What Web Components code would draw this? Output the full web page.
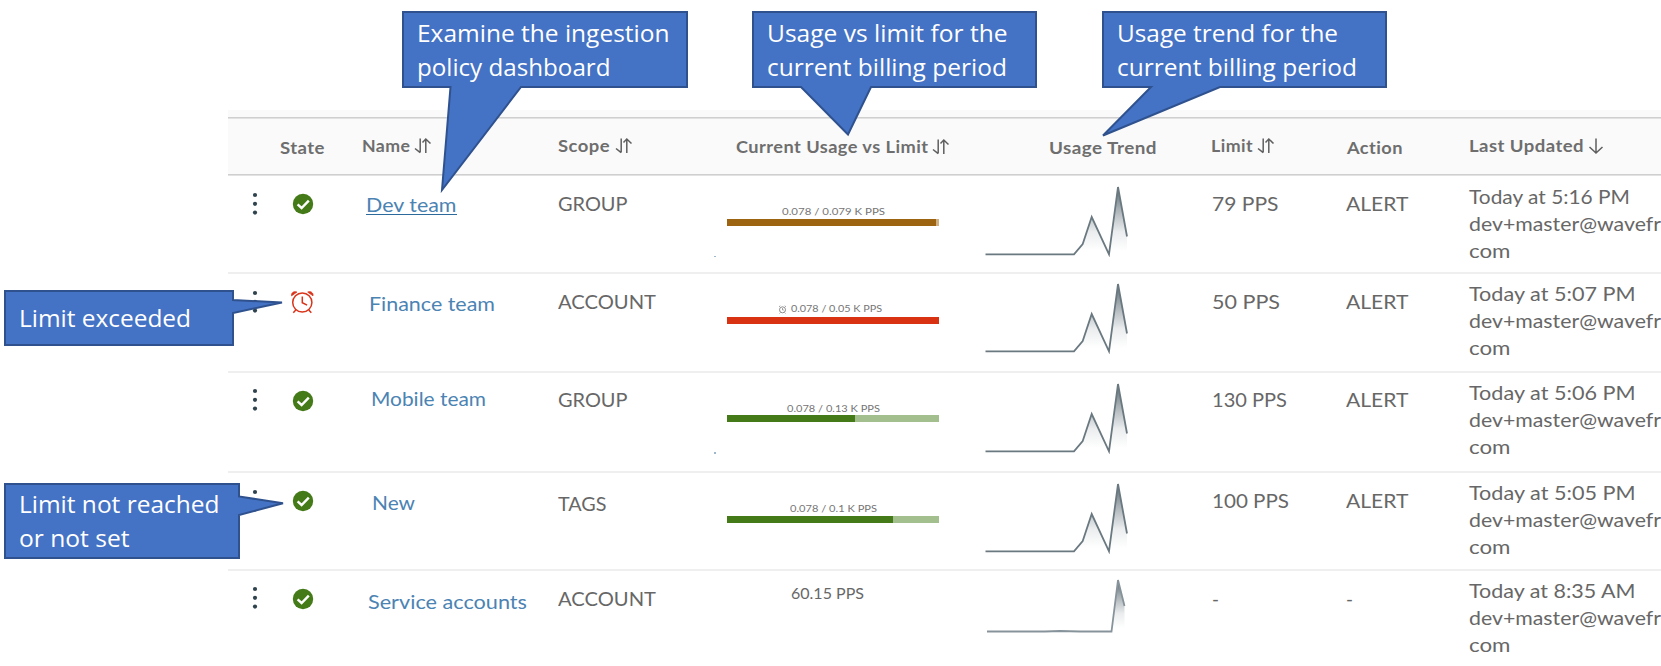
<!DOCTYPE html>
<html lang="en">
<head>
<meta charset="utf-8">
<title>Ingestion policies</title>
<style>
html,body{margin:0;height:666px;overflow:hidden;background:#fff}
body{font-family:Lato,"Open Sans",sans-serif;position:relative}
</style>
</head>
<body>
<policy-page></policy-page>
<script>
const mount = (el, html) => { const r = el.attachShadow({mode:'open'}); const t = document.createElement('template'); t.innerHTML = html; r.append(t.content.cloneNode(true)); return r; };

/* A single line of text stretched to a given width. */
customElements.define('fit-text', class extends HTMLElement {
  connectedCallback() {
    if (this.shadowRoot) return;
    const r = mount(this, `<style>:host{display:block;white-space:nowrap;line-height:20px}
      span{display:inline-block;transform-origin:0 50%}</style><span><slot></slot></span>`);
    const s = r.querySelector('span'), w = +this.getAttribute('w');
    if (w) { const k = w / s.getBoundingClientRect().width; s.style.transform = `scaleX(${k})`; this.style.width = w + 'px'; }
  }
});

customElements.define('sort-arrows', class extends HTMLElement {
  connectedCallback() {
    const single = this.hasAttribute('single');
    mount(this, `<style>:host{display:block;line-height:0}svg{fill:none;stroke:#5f5f5f;stroke-width:1.5}</style>` + (single
      ? `<svg width="16" height="18"><path d="M8 1.5V16M1.5 10L8 16L14.500 10"/></svg>`
      : `<svg width="18" height="18"><path d="M6.200 1.500V15.500M1 11.500L6.200 15.700M11.800 16V2M8.500 5.500L11.800 2L16.500 6.500"/></svg>`));
  }
});

customElements.define('state-icon', class extends HTMLElement {
  connectedCallback() {
    mount(this, `<style>:host{display:block;line-height:0}</style>` + (this.getAttribute('kind') === 'alarm'
      ? `<svg width="24" height="24" viewBox="0 0 24 24" fill="none" stroke="#d9331a" stroke-width="1.500"><circle cx="11.300" cy="12.500" r="9.600"/><path d="M11.300 6.500V12.700L16.100 15.200M4.800 20L2.300 22.800M17.800 20L20.300 22.800"/><path d="M.6 5.800C0 3 2.800.7 5.900 2.100zM22 5.800C22.600 3 19.800.7 16.700 2.100z" fill="#d9331a" stroke-width=".8"/></svg>`
      : `<svg width="24" height="24" viewBox="0 0 24 24"><circle cx="12" cy="12" r="10.200" fill="#447a17"/><path d="M6.600 12.300L10.600 16L17.800 8.600" fill="none" stroke="#fff" stroke-width="2.400"/></svg>`));
  }
});

customElements.define('row-menu', class extends HTMLElement {
  connectedCallback() {
    mount(this, `<style>:host{display:block;line-height:0}</style><svg width="8" height="24" fill="#2f434e"><circle cx="4" cy="3" r="2.100"/><circle cx="4" cy="11.800" r="2.100"/><circle cx="4" cy="20.600" r="2.100"/></svg>`);
  }
});

customElements.define('usage-bar', class extends HTMLElement {
  connectedCallback() {
    mount(this, `<style>:host{display:block;width:211.500px;height:6.700px;background:var(--rest)}i{display:block;height:100%;background:var(--fill);width:${this.getAttribute('value')}%}</style><i></i>`);
  }
});

customElements.define('trend-line', class extends HTMLElement {
  connectedCallback() {
    const last = this.hasAttribute('flat');
    const line = last ? 'M2 53.500L60 53.500L75 53L95 53.500H126.500L133 2L139.500 28' : 'M.5 69.300H89L97.700 59L106.700 32L124 69.300L133 2L142 51.500';
    const area = last ? 'M126.500 53.500L133 2L139.500 28V53.500z' : 'M89 69.300L97.700 59L106.700 32L124 69.300L133 2L142 51.500V69.300z';
    mount(this, `<style>:host{display:block;line-height:0}</style><svg width="146" height="72"><defs><linearGradient id="g" gradientUnits="userSpaceOnUse" x1="0" y1="2" x2="0" y2="${last?50:66}"><stop offset="0" stop-color="#56666f"/><stop offset=".35" stop-color="#56666f" stop-opacity=".5"/><stop offset=".7" stop-color="#56666f" stop-opacity=".12"/><stop offset="1" stop-color="#56666f" stop-opacity="0"/></linearGradient></defs><path d="${area}" fill="url(#g)"/><path d="${line}" fill="none" stroke="${last?'#87939a':'#6a7880'}" stroke-width="1.800"/></svg>`);
  }
});

const GRID = 'display:grid;grid-template-columns:54px 80px 196px 169px 258px 226px 135px 123px 192px;box-sizing:border-box;';
const cell = (top, left, body) => `<div style="padding:${top}px 0 0 ${left}px">${body}</div>`;

customElements.define('policy-head', class extends HTMLElement {
  connectedCallback() {
    const h = (top, left, w, label, sort='', gap=3) => cell(top, left, `<div class="h"><fit-text w="${w}">${label}</fit-text>${sort ? `<sort-arrows ${sort==='one'?'single':''} style="margin-left:${gap}px"></sort-arrows>`:''}</div>`);
    mount(this, `<style>:host{${GRID}height:66px;padding-top:7px;background:linear-gradient(#fafafa 0 7px,#cfcfcf 7px 8px,#e2e2e2 8px 9px,#fafafa 9px 64px,#cfcfcf 64px 65px,#e2e2e2 65px)}
      .h{display:flex;align-items:center;font-size:16.300px;font-weight:700;color:#6e6e6e;letter-spacing:.4px}</style>
      <div></div>${h(21,-2,45,'State').replace('padding:21px 0 0 -2px','margin:20.500px 0 0 -2.500px')}${h(19,0,48.5,'Name','two')}${h(19,0,52,'Scope','two',5)}${h(19.5,8.7,192.5,'Current Usage vs Limit','two',4)}${h(20.5,64,108,'Usage Trend')}${h(19,0,42,'Limit','two',4)}${h(20.5,0.500,56,'Action')}${h(19,0,115,'Last Updated','one',4)}`);
  }
});

/* y values are measured from the top edge of the row. */
customElements.define('policy-row', class extends HTMLElement {
  connectedCallback() {
    const d = this.data, y = c => c - d.top - 10;
    const usage = d.bar ? `<div class="u" style="padding:${d.usage[3]-d.top-10.500}px 0 0 ${d.usage[1]-727}px">${d.alarm?'<svg width="9" height="9" viewBox="0 0 9 9"><circle cx="4.500" cy="4.800" r="3" fill="none" stroke="#8a8a8a"/><path d="M1 1.800L2.300.8M8 1.800L6.700.8M4.500 3v2h1.300M2.500 7.500l-1 1M6.500 7.500l1 1" fill="none" stroke="#8a8a8a" stroke-width=".8"/></svg>':''}<fit-text w="${d.usage[2]}">${d.usage[0]}</fit-text></div><usage-bar value="${d.bar[1]}" style="margin:${d.bar[0]-d.usage[3]-9.500}px 0 0 .3px;--fill:${d.bar[2]};--rest:${d.bar[3]}"></usage-bar>${d.dot?'<b></b>':''}`
      : cell(y(d.usage[3]), d.usage[1]-727, `<fit-text style="font-size:15px" w="${d.usage[2]}">${d.usage[0]}</fit-text>`);
    mount(this, `<style>:host{${GRID}height:${d.h}px;border-bottom:${d.last?0:2}px solid #efefef;color:#676767;font-size:18.600px;overflow:hidden}
      .u{display:flex;align-items:center;font-size:${d.alarm?9.5:10.3}px;color:#757575}.u svg{margin-right:4px}
      a{color:#4b83b3;text-decoration:none}a.on{display:block;width:90.500px;height:18.500px;border-bottom:1.500px solid #2c6a9b}
      .t{display:grid;gap:7px}b{display:block;width:1.500px;height:1.500px;background:#9db8cc;margin:30px 0 0 -13px}</style>
      ${cell(d.icon-d.top-12.600,23,'<row-menu></row-menu>')}
      ${cell(d.icon-d.top-12,9,`<state-icon kind="${d.alarm?'alarm':'ok'}"></state-icon>`)}
      ${cell(y(d.name[3]),d.name[1]-362,`<a class="${d.on?'on':''}"><fit-text w="${d.name[2]}">${d.name[0]}</fit-text></a>`)}
      ${cell(y(d.scope[2]),0,`<fit-text w="${d.scope[1]}">${d.scope[0]}</fit-text>`)}
      <div>${usage}</div>
      ${cell(d.peak-d.top-2,0,`<trend-line ${d.last?'flat':''}></trend-line>`)}
      ${cell(y(d.limit[2]),0.5,`<fit-text w="${d.limit[1]}">${d.limit[0]}</fit-text>`)}
      ${cell(y(d.limit[2]),0,d.last?'<fit-text w="7">-</fit-text>':'<fit-text w="62.500">ALERT</fit-text>')}
      ${cell(y(d.when[2]),0,`<div class="t"><fit-text w="${d.when[1]}">${d.when[0]}</fit-text><fit-text w="192">dev+master@wavefr</fit-text><fit-text w="41.500">com</fit-text></div>`)}`);
  }
});

/* Speech-bubble annotation; its box and tail are one outline. */
customElements.define('call-out', class extends HTMLElement {
  connectedCallback() {
    const [x,y,w,h] = this.getAttribute('box').split(' ').map(Number);
    mount(this, `<style>:host{position:absolute;left:${x}px;top:${y}px;width:${w}px;height:${h}px;display:flex;flex-direction:column;justify-content:center;gap:14px;padding-left:15px;box-sizing:border-box;color:#fff}
      svg{position:absolute;left:0;top:0;overflow:visible}::slotted(*){position:relative}</style>
      <svg width="${w}" height="${h}"><path d="${this.getAttribute('shape')}" fill="#4472c4" stroke="#2f528f" stroke-width="2" stroke-miterlimit="4"/></svg><slot></slot>`);
  }
});

const G = '#447a17', GL = '#a3bf8d';
const rows = [
 {top:176,h:98,icon:204.300,on:1,name:['Dev team',366,90.500,205],scope:['GROUP',69.500,203.500],usage:['0.078 / 0.079 K PPS',782,103,211],bar:[219,98.800,'#9c6410','#d0b183'],peak:187,limit:['79 PPS',66.500,203.500],when:['Today at 5:16 PM',161,196.500],dot:1},
 {top:274,h:99,icon:302.300,alarm:1,name:['Finance team',368.500,126,304],scope:['ACCOUNT',98,301.500],usage:['0.078 / 0.05 K PPS',777.500,91,309.500],bar:[317,100,'#d93213','#d93213'],peak:284,limit:['50 PPS',68,301.500],when:['Today at 5:07 PM',166.500,294]},
 {top:373,h:100,icon:401,name:['Mobile team',370.500,115,399],scope:['GROUP',69.500,400],usage:['0.078 / 0.13 K PPS',787,93,408],bar:[415.300,60.300,G,GL],peak:383.500,limit:['130 PPS',75,400],when:['Today at 5:06 PM',166.500,392.500],dot:1},
 {top:473,h:98,icon:501.300,name:['New',371.500,43,502.500],scope:['TAGS',48.500,503.500],usage:['0.078 / 0.1 K PPS',790,87,508],bar:[516,78.300,G,GL],peak:484,limit:['100 PPS',77,501],when:['Today at 5:05 PM',166.500,493]},
 {top:571,h:95,icon:599,last:1,name:['Service accounts',367.500,159,601.500],scope:['ACCOUNT',98,598.500],usage:['60.15 PPS',790.500,73,592.500],peak:579.500,limit:['-',7,598.500],when:['Today at 8:35 AM',166.500,591]}
];

customElements.define('policy-table', class extends HTMLElement {
  connectedCallback() {
    const r = mount(this, `<style>:host{display:block;margin:0 0 0 228px;padding-top:110px}</style><policy-head></policy-head>`);
    for (const d of rows) { const e = document.createElement('policy-row'); e.data = d; r.append(e); }
  }
});

customElements.define('policy-page', class extends HTMLElement {
  connectedCallback() {
    const t = (w, s) => `<fit-text w="${w}">${s}</fit-text>`;
    mount(this, `<style>:host{display:block;position:relative;width:1661px;height:666px;overflow:hidden}call-out fit-text{font:23.800px/20px "Open Sans",sans-serif}</style>
    <policy-table></policy-table>
    <call-out box="402 11 286 77" shape="M1 1H285V76H119L40 179L48.500 76H1z">${t(252.5,'Examine the ingestion')}${t(193.500,'policy dashboard')}</call-out>
    <call-out box="752 11 285 77" shape="M1 1H284V76H119L96 123.500L49 76H1z">${t(240.500,'Usage vs limit for the')}${t(240,'current billing period')}</call-out>
    <call-out box="1102 11 285 77" shape="M1 1H284V76H118L1 124.500L49 76H1z">${t(221,'Usage trend for the')}${t(240,'current billing period')}</call-out>
    <call-out box="4 290 230 56" shape="M1 1H229V10L278 12.500L229 23V55H1z">${t(172,'Limit exceeded')}</call-out>
    <call-out box="4 483 236 76" shape="M1 1H235V13.500L279 20.300L235 32V75H1z">${t(200.5,'Limit not reached')}${t(110.5,'or not set')}</call-out>`);
  }
});
</script>
</body>
</html>
